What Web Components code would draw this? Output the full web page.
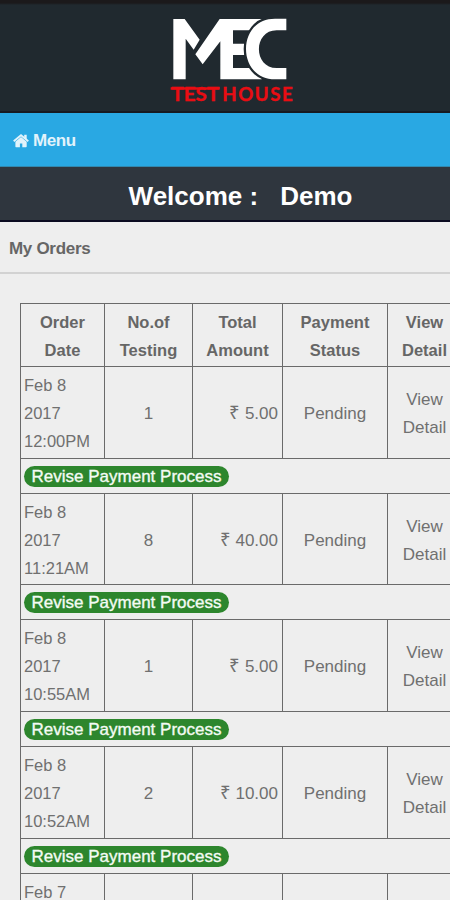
<!DOCTYPE html>
<html lang="en">
<head>
<meta charset="UTF-8">
<title>My Orders</title>
<style>
    html, body {
        margin: 0;
        height: 900px;
        overflow: hidden;
        background: #eee;
        font-family: "Liberation Sans", Arial, sans-serif;
        color: #707070;
    }
</style>
</head>
<body>
<site-header></site-header>
<menu-bar>Menu</menu-bar>
<welcome-bar name="Demo">Welcome :</welcome-bar>
<page-title>My Orders</page-title>
<order-table>
    <order-row date="Feb 8|2017|12:00PM" tests="1" amount="5.00"></order-row>
    <order-row date="Feb 8|2017|11:21AM" tests="8" amount="40.00"></order-row>
    <order-row date="Feb 8|2017|10:55AM" tests="1" amount="5.00"></order-row>
    <order-row date="Feb 8|2017|10:52AM" tests="2" amount="10.00"></order-row>
    <order-row date="Feb 7" tests="" amount=""></order-row>
</order-table>

<script>
class SiteHeader extends HTMLElement {
    constructor() {
        super();
        this.attachShadow({ mode: 'open' });
    }

    connectedCallback() {
        this.shadowRoot.innerHTML = `
            <style>
                :host {
                    display: flex;
                    justify-content: center;
                    box-sizing: border-box;
                    height: 113px;
                    padding-left: 10px;
                    background: linear-gradient(#1b191b 0, #1b191b 3px, #20292f 5px);
                    border-bottom: 2px solid #171a20;
                }
                svg {
                    width: 160px;
                    height: 115px;
                    flex: none;
                }
            </style>
            <svg viewBox="0 0 480 345">
                <g fill="#fff">
                    <path d="M70 57H104L149 119L131 149L107 116V238H70Z"/>
                    <path d="M209 57H335V91H249V131H300V165H249V204H335V238H211V124L158 193L136 163Z"/>
                    <path d="M409 56V91H380C309 91 309 204 380 204H409V238H375C259 238 259 56 375 56Z" stroke="#20292f" stroke-width="14" paint-order="stroke"/>
                </g>
                <g fill="#e90d13" stroke="#e90d13" stroke-width="1" font-family="Lato, sans-serif" font-weight="700" font-size="58">
                    <text x="64" y="304" textLength="144" lengthAdjust="spacingAndGlyphs">TEST</text>
                    <text x="217" y="304" textLength="211" lengthAdjust="spacing" font-size="56">HOUSE</text>
                </g>
                <path d="M62 265.5H208" stroke="#e90d13" stroke-width="8"/>
            </svg>
        `;
    }
}

class MenuBar extends HTMLElement {
    constructor() {
        super();
        this.attachShadow({ mode: 'open' });
    }

    connectedCallback() {
        this.shadowRoot.innerHTML = `
            <style>
                :host {
                    display: flex;
                    align-items: center;
                    gap: 4px;
                    box-sizing: border-box;
                    height: 54px;
                    padding: 2px 0 0 13px;
                    background: #29a8e3;
                    border-bottom: 1px solid #3188ae;
                    color: #e2f3fb;
                    font-size: 17px;
                    font-weight: bold;
                    letter-spacing: -0.4px;
                }
                svg { width: 16px; height: 14px; }
            </style>
            <svg viewBox="0 0 16 14" fill="#e2f3fb">
                <path d="M8 3L13.7 7.7V12.5Q13.7 13.2 13 13.2H9.3V9.5H6.9V13.2H3Q2.4 13.2 2.4 12.5V7.7Z"/>
                <path d="M0.7 7.3L8 1.2L15.3 7.3" fill="none" stroke="#e2f3fb" stroke-width="1.8"/>
                <path d="M11.2 0.8H13.7V6L11.2 4Z"/>
            </svg>
            <slot></slot>
        `;
    }
}

class WelcomeBar extends HTMLElement {
    constructor() {
        super();
        this.attachShadow({ mode: 'open' });
    }

    connectedCallback() {
        this.shadowRoot.innerHTML = `
            <style>
                :host {
                    display: flex;
                    justify-content: center;
                    align-items: center;
                    gap: 22px;
                    box-sizing: border-box;
                    height: 55px;
                    padding: 5px 0 0 31px;
                    background: #2f363e;
                    border-bottom: 2px solid #0b0b20;
                    color: #fff;
                    font-size: 26px;
                    font-weight: bold;
                }
            </style>
            <span><slot></slot></span>
            <span>${this.getAttribute('name')}</span>
        `;
    }
}

class PageTitle extends HTMLElement {
    constructor() {
        super();
        this.attachShadow({ mode: 'open' });
    }

    connectedCallback() {
        this.shadowRoot.innerHTML = `
            <style>
                :host {
                    display: flex;
                    align-items: center;
                    box-sizing: border-box;
                    height: 52px;
                    padding: 4px 0 0 9px;
                    border-bottom: 2px solid #d2d2d2;
                    color: #666;
                    font-size: 17px;
                    font-weight: bold;
                    letter-spacing: -0.3px;
                }
            </style>
            <slot></slot>
        `;
    }
}

class OrderTable extends HTMLElement {
    constructor() {
        super();
        this.attachShadow({ mode: 'open' });
    }

    connectedCallback() {
        this.shadowRoot.innerHTML = `
            <style>
                :host {
                    display: block;
                    width: 442px;
                    margin: 29.3px 0 0 20px;
                    border-left: 1px solid #6a6a6a;
                    border-top: 1px solid #6a6a6a;
                    --columns: 84px 88px 90px 105px 74px;
                }
                .head {
                    display: grid;
                    grid-template-columns: var(--columns);
                    height: 63px;
                    color: #666;
                    font-size: 16.5px;
                    font-weight: bold;
                    line-height: 28px;
                    text-align: center;
                }
                .head div {
                    box-sizing: border-box;
                    padding-top: 4px;
                    border-right: 1px solid #6a6a6a;
                    border-bottom: 1px solid #6a6a6a;
                }
            </style>
            <div class="head">
                <div>Order<br>Date</div>
                <div>No.of<br>Testing</div>
                <div>Total<br>Amount</div>
                <div>Payment<br>Status</div>
                <div>View<br>Detail</div>
            </div>
            <slot></slot>
        `;
    }
}

class OrderRow extends HTMLElement {
    constructor() {
        super();
        this.attachShadow({ mode: 'open' });
    }

    connectedCallback() {
        const date = this.getAttribute('date').split('|');
        const tests = this.getAttribute('tests');
        const amount = this.getAttribute('amount');
        const full = date.length > 1;

        this.shadowRoot.innerHTML = `
            <style>
                :host {
                    display: block;
                    height: 126.6px;
                    font-size: 17px;
                    line-height: 28px;
                }
                .cells {
                    display: grid;
                    grid-template-columns: var(--columns);
                    height: 91.6px;
                }
                .cells > div {
                    display: flex;
                    flex-direction: column;
                    justify-content: center;
                    align-items: center;
                    box-sizing: border-box;
                    padding: 3.4px 0 0 0;
                    border-right: 1px solid #6a6a6a;
                    border-bottom: 1px solid #6a6a6a;
                    white-space: nowrap;
                }
                .cells > .date {
                    justify-content: flex-start;
                    align-items: flex-start;
                    padding: 4px 0 0 3px;
                    font-size: 16.5px;
                }
                .cells > .amount {
                    align-items: flex-end;
                    padding-right: 4px;
                }
                .rupee { font-size: 18.5px; line-height: 1; }
                .action {
                    display: flex;
                    align-items: center;
                    box-sizing: border-box;
                    height: 35px;
                    padding: 1px 0 0 3px;
                    border-bottom: 1px solid #6a6a6a;
                }
                .button {
                    box-sizing: border-box;
                    width: 205px;
                    height: 21px;
                    border-radius: 10.5px;
                    background: #2d862d;
                    color: #f4fbf4;
                    line-height: 22px;
                    text-align: center;
                    white-space: nowrap;
                    -webkit-text-stroke: 0.35px #f4fbf4;
                }
            </style>
            <div class="cells">
                <div class="date">${date.map(line => `<span>${line}</span>`).join('')}</div>
                <div>${tests}</div>
                <div class="amount">${amount ? `<span><span class="rupee">₹</span> ${amount}</span>` : ''}</div>
                <div>${full ? 'Pending' : ''}</div>
                <div><span>View</span><span>Detail</span></div>
            </div>
            ${full ? '<div class="action"><div class="button">Revise Payment Process</div></div>' : ''}
        `;
    }
}

customElements.define('site-header', SiteHeader);
customElements.define('menu-bar', MenuBar);
customElements.define('welcome-bar', WelcomeBar);
customElements.define('page-title', PageTitle);
customElements.define('order-table', OrderTable);
customElements.define('order-row', OrderRow);
</script>
</body>
</html>
